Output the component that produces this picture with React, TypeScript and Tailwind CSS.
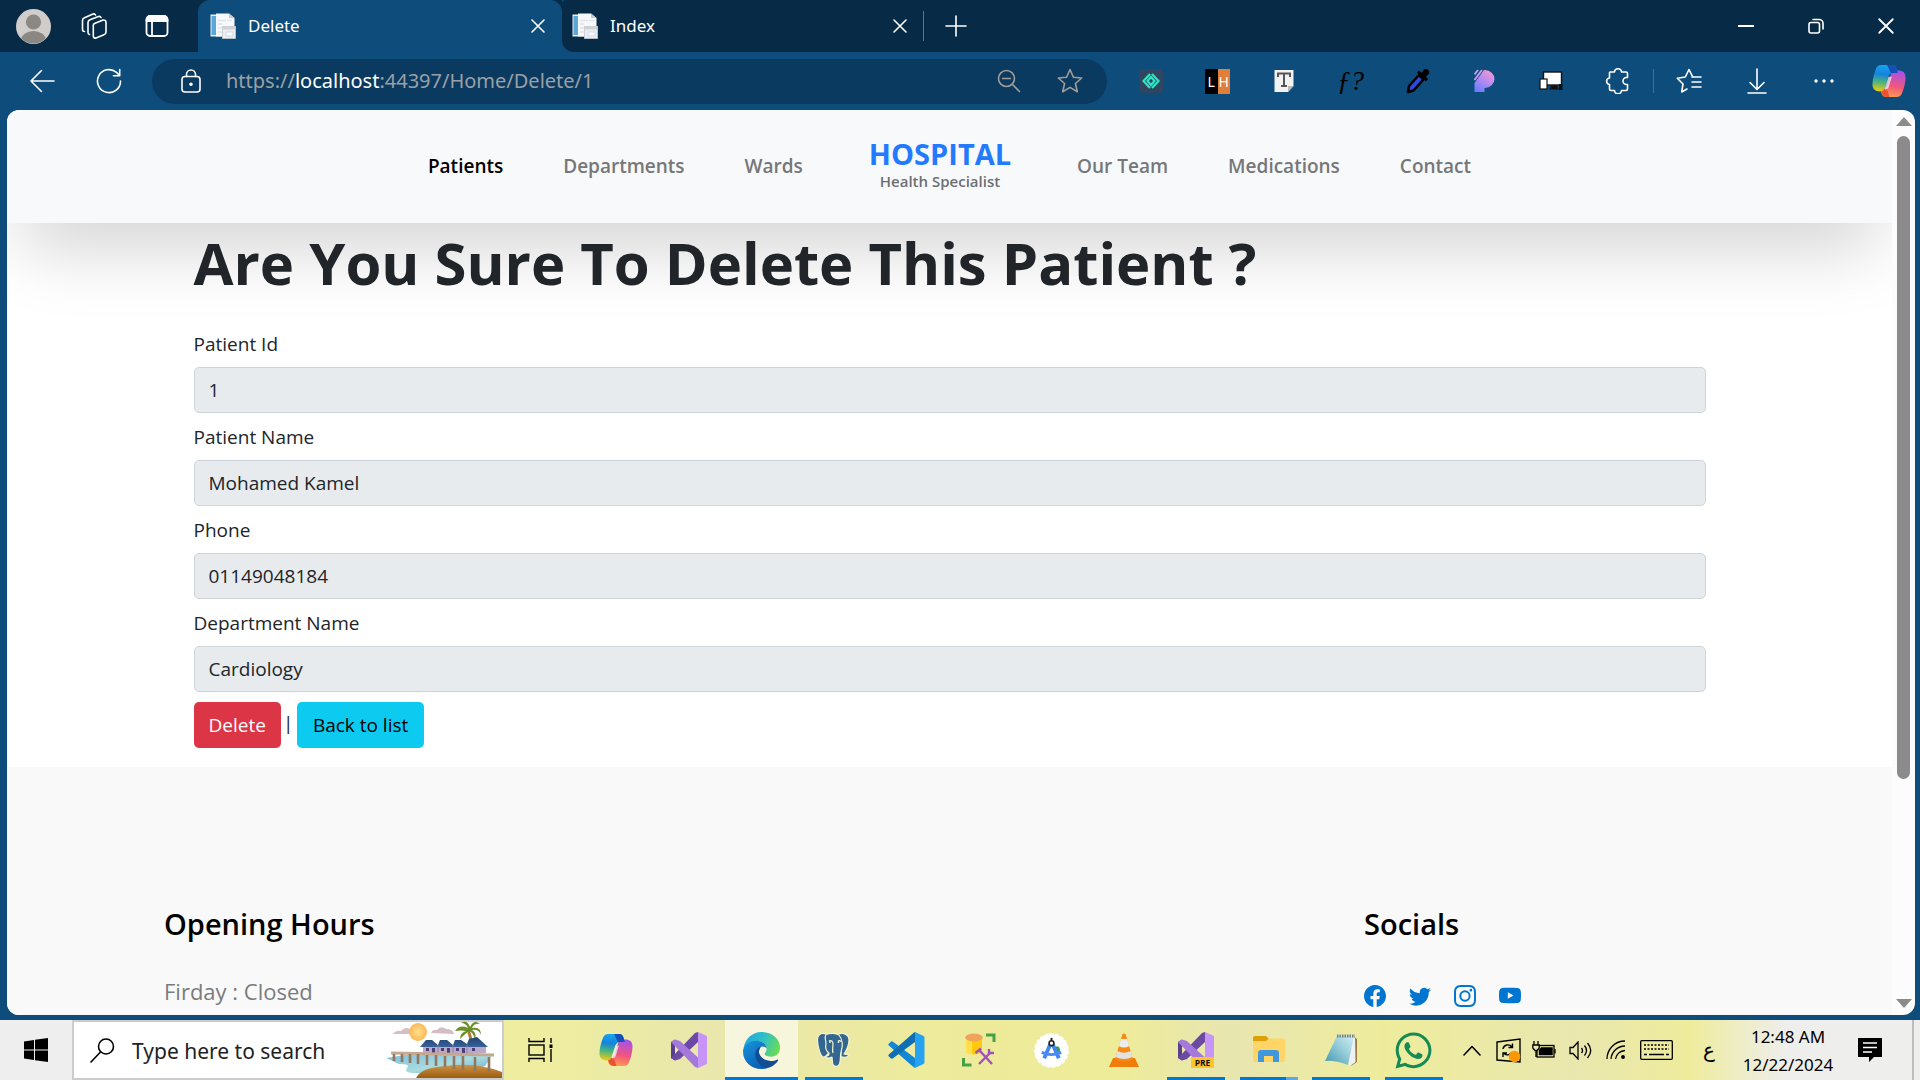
import React from "react";
import { BsFacebook, BsTwitter, BsInstagram, BsYoutube } from "react-icons/bs";
import { FaWhatsapp } from "react-icons/fa";

const stroke = { fill: "none", stroke: "currentColor", strokeWidth: 1.6, strokeLinecap: "round" as const, strokeLinejoin: "round" as const };

/* ---------- browser icons ---------- */

function Avatar() {
  return (
    <svg width="35" height="35" viewBox="0 0 35 35">
      <defs><clipPath id="av"><circle cx="17.5" cy="17.5" r="17" /></clipPath></defs>
      <circle cx="17.5" cy="17.5" r="17.5" fill="#d0cdca" />
      <g clipPath="url(#av)" fill="#8b8783">
        <circle cx="17.5" cy="13" r="7.6" />
        <ellipse cx="17.5" cy="31" rx="12.5" ry="9" />
      </g>
    </svg>
  );
}

function WorkspacesIcon() {
  return (
    <svg width="28" height="28" viewBox="0 0 28 28" {...stroke}>
      <path d="M14.5 11.5 L23 8 a2.5 2.5 0 0 1 3 2.4 V20 a3 3 0 0 1-2 2.8 L16 26 a2 2 0 0 1-2.700-2 V13.500 a2.200 2.200 0 0 1 1.200-2z" />
      <path d="M9.500 22.500 a2 2 0 0 1-1.500-2 V10.500 a3 3 0 0 1 2-2.800 L18.500 4.500 a2 2 0 0 1 2.500 1" />
      <path d="M4.500 19.500 a2 2 0 0 1-2-2 V8.500 a3 3 0 0 1 2-2.800 L13 2 a2 2 0 0 1 2.500 1" />
    </svg>
  );
}

function TabActionsIcon() {
  return (
    <svg width="24" height="24" viewBox="0 0 24 24" {...stroke} strokeWidth={1.8}>
      <rect x="1.500" y="2" width="21" height="20" rx="3.500" />
      <path d="M1.500 6 a4 4 0 0 1 4-4 H18.500 a4 4 0 0 1 4 4 V7 H1.500z" fill="currentColor" />
      <path d="M7 7 V22" />
    </svg>
  );
}

function Favicon() {
  return (
    <svg width="26" height="26" viewBox="0 0 26 26">
      <rect x="0.500" y="1.500" width="14" height="22" fill="#e9eef3" />
      <rect x="1.500" y="3" width="5" height="19" fill="#5aa7d8" />
      <path d="M6 0.500 H19 L24.500 5 V23.500 H6z" fill="#f7f8fa" />
      <path d="M19 0.500 L24.500 5 H19z" fill="#c3c9d1" />
      <path d="M8 7.500 H16 M8 11 H12 M8 15 H12 M8 19 H12 M17 7.500 H22" stroke="#e0e4ea" strokeWidth="1.500" />
      <rect x="12.500" y="13.500" width="13" height="12" fill="#eceef1" stroke="#c4c7cc" strokeWidth="0.800" />
      <rect x="12.500" y="13.500" width="13" height="3" fill="#cfd2d6" />
      <rect x="16" y="19" width="7" height="4" fill="#f8f9ff" stroke="#c3c9e3" strokeWidth="0.600" />
    </svg>
  );
}

function CloseIcon({ size }: { size: number }) {
  return (
    <svg width={size} height={size} viewBox="0 0 16 16" {...stroke}>
      <path d="M2 2 L14 14 M14 2 L2 14" />
    </svg>
  );
}

function Copilot({ id }: { id: string }) {
  const ribbon = "M10 1 H21 C24.500 1 25.500 3 26.500 6.500 L27.300 9.500 H25 C21.500 9.500 20.300 11 19.200 14.500 L16 25 C15 28 12.500 29 8.500 29 C3 29 0.500 26.500 0.500 21.500 C0.500 16 2.500 9 4.500 4.500 C5.500 2 7.500 1 10 1z";
  return (
    <svg width="34" height="34" viewBox="0 0 36 36">
      <defs>
        <linearGradient id={id + "a"} x1="0.400" y1="0" x2="0.300" y2="1">
          <stop offset="0" stopColor="#18a4f0" /><stop offset="0.350" stopColor="#1583dd" /><stop offset="0.650" stopColor="#4bb57c" /><stop offset="1" stopColor="#f2cb10" />
        </linearGradient>
        <linearGradient id={id + "b"} x1="0.500" y1="0" x2="0.300" y2="1">
          <stop offset="0" stopColor="#ff9a50" /><stop offset="0.400" stopColor="#f0567c" /><stop offset="1" stopColor="#a550ee" />
        </linearGradient>
      </defs>
      <path d={ribbon} transform="rotate(180 18 18)" fill={"url(#" + id + "b)"} />
      <path d="M9 26.500 L15.500 26 L18.500 35 H16 C12 35 11 33 10 29.500z" fill="#ee5130" />
      <path d="M10 1 H21 C24.500 1 25.500 3 26.500 6.500 L27.300 9.500 H24 C19.500 9.500 18 11 16.900 14.500 L13.600 25 C12.600 28 11.500 29 8.500 29 C3 29 0.500 26.500 0.500 21.500 C0.500 16 2.500 9 4.500 4.500 C5.500 2 7.500 1 10 1z" fill={"url(#" + id + "a)"} />
      <path d="M16 1 H21 C24.500 1 25.500 3 26.500 6.500 L27.300 9.500 H20z" fill="#1550b8" />
      <path d="M17.500 13.500 H21 L17.500 25 Q16.500 27 14 27 L13.200 26z" fill="#f4f0f6" opacity="0.750" />
    </svg>
  );
}

type IconButtonProps = { label: string; className?: string; children: React.ReactNode };

function IconButton({ label, className = "", children }: IconButtonProps) {
  return (
    <button type="button" aria-label={label} className={"flex shrink-0 items-center justify-center " + className}>
      {children}
    </button>
  );
}

function TabStrip() {
  return (
    <header className="flex h-[52px] shrink-0 bg-[#072b47] text-white">
      <div className="flex w-[198px] shrink-0 items-center pl-2">
        <IconButton label="Profile" className="w-[50px]"><Avatar /></IconButton>
        <IconButton label="Workspaces" className="w-[72px]"><WorkspacesIcon /></IconButton>
        <IconButton label="Tab actions" className="w-[54px]"><TabActionsIcon /></IconButton>
      </div>
      <div className="flex w-[364px] shrink-0 items-center rounded-t-xl bg-[#0d4c7b] pl-3 pr-4">
        <Favicon />
        <span className="ml-[12px] flex-1 text-[17px]">Delete</span>
        <IconButton label="Close Delete tab" className="size-4"><CloseIcon size={16} /></IconButton>
      </div>
      <div className="flex flex-1 bg-[linear-gradient(90deg,#0d4c7b_0_20px,#072b47_20px)]">
        <div className="flex flex-1 items-center rounded-bl-xl rounded-tl-sm bg-[#072b47] pl-[10px]">
          <Favicon />
          <span className="ml-[12px] w-[282px] text-[17px]">Index</span>
          <IconButton label="Close Index tab" className="size-4"><CloseIcon size={16} /></IconButton>
          <span className="ml-[15px] h-[30px] w-px bg-[#5b7488]" />
          <IconButton label="New tab" className="ml-[20px] size-6">
            <svg width="24" height="24" viewBox="0 0 24 24" {...stroke}><path d="M12 2 V22 M2 12 H22" /></svg>
          </IconButton>
          <div className="flex-1" />
          <IconButton label="Minimize" className="w-[70px]">
            <svg width="16" height="16" viewBox="0 0 16 16"><path d="M0 8 H16" stroke="white" strokeWidth="2" /></svg>
          </IconButton>
          <IconButton label="Restore" className="w-[70px]">
            <svg width="16" height="16" viewBox="0 0 16 16" {...stroke}>
              <rect x="1" y="4.500" width="10.500" height="10.500" rx="2" /><path d="M5 1.500 H11 a4 4 0 0 1 4 4 V11" />
            </svg>
          </IconButton>
          <IconButton label="Close window" className="w-[69px]"><CloseIcon size={18} /></IconButton>
        </div>
      </div>
    </header>
  );
}

function Toolbar() {
  return (
    <div className="flex h-[58px] shrink-0 items-center text-white">
      <IconButton label="Back" className="ml-2 w-[68px]">
        <svg width="26" height="24" viewBox="0 0 26 24" {...stroke}><path d="M25 12 H2 M12.500 1.500 L2 12 L12.500 22.500" /></svg>
      </IconButton>
      <IconButton label="Refresh" className="w-[66px]">
        <svg width="26" height="26" viewBox="0 0 26 26" {...stroke}><path d="M24.500 13 A11.500 11.500 0 1 1 20.500 4.400 L23.500 7.500 M23.700 1.500 V7.700 H17.500" /></svg>
      </IconButton>
      <div className="ml-[10px] flex h-[45px] flex-1 items-center rounded-full bg-[#0a3a60] pl-[26px] pr-[22px]">
        <IconButton label="View site information" className="w-[26px]">
          <svg width="20" height="24" viewBox="0 0 20 24" {...stroke}>
            <rect x="1" y="7.500" width="18" height="15.500" rx="3" /><path d="M5.500 7.500 V5.500 a4.500 4.500 0 0 1 9 0 V7.500" /><circle cx="10" cy="15.200" r="1" fill="currentColor" />
          </svg>
        </IconButton>
        <div role="textbox" aria-label="Address" className="ml-[22px] flex-1 text-[20px] text-[#9aa0a6]">
          https://<span className="text-white">localhost</span>:44397/Home/Delete/1
        </div>
        <IconButton label="Zoom out" className="w-[30px] text-[#a09c98]">
          <svg width="24" height="24" viewBox="0 0 24 24" {...stroke}><circle cx="9.500" cy="9.500" r="8" /><path d="M15.500 15.500 L22.500 22.500 M5.500 9.500 H13.500" /></svg>
        </IconButton>
        <IconButton label="Add to favorites" className="ml-[31px] w-[30px] text-[#a09c98]">
          <svg width="26" height="26" viewBox="0 0 26 26" {...stroke}><path d="M13 1.500 L16.400 9.200 L24.700 10 L18.400 15.500 L20.300 23.800 L13 19.400 L5.700 23.800 L7.600 15.500 L1.300 10 L9.600 9.200z" /></svg>
        </IconButton>
      </div>
      <div className="ml-[10px] flex shrink-0 items-center">
        <IconButton label="Code extension" className="w-[67px]">
          <span className="flex size-6 items-center justify-center rounded bg-[#2f4560]">
            <svg width="18" height="16" viewBox="0 0 18 16" fill="none" stroke="#2de5c3" strokeWidth="2.200"><path d="M8 1 L1.500 8 L8 15 M10 1 L16.500 8 L10 15 M9 4 L5.500 8 L9 12 L12.500 8z" /></svg>
          </span>
        </IconButton>
        <IconButton label="LH extension" className="w-[67px]">
          <span className="flex h-[25px] w-[25px] text-[14px] leading-[25px]">
            <span className="flex-1 bg-black text-center">L</span><span className="flex-1 bg-[#e07f3c] text-center">H</span>
          </span>
        </IconButton>
        <IconButton label="Text extension" className="w-[66px]">
          <svg width="20" height="24" viewBox="0 0 20 24">
            <path d="M0.500 1 H19.500 V17 L14 23 H0.500z" fill="#f2f2f2" /><path d="M19.500 17 L14 23 V17z" fill="#b9b9b9" />
            <path d="M4 8 V4.500 H16 V8 M10 4.500 V17 M7 17 H13" fill="none" stroke="#555" strokeWidth="2" />
          </svg>
        </IconButton>
        <IconButton label="Font finder" className="w-[67px] font-['Liberation_Serif',serif] text-[27px] italic leading-none text-black">ƒ?</IconButton>
        <IconButton label="Color picker" className="w-[67px]">
          <svg width="24" height="26" viewBox="0 0 24 26">
            <path d="M2 24 L3 18 L13 7 L17.500 11.500 L7.500 22.500z" fill="#2f49d8" stroke="black" strokeWidth="2.600" strokeLinejoin="round" />
            <path d="M11 4.500 L20 13.500 L22 11 L20 9 L23 5.500 C24 2 21 0 18 1.500 L15.500 5 L13 2.500z" fill="black" />
          </svg>
        </IconButton>
        <IconButton label="Pastel extension" className="w-[66px]">
          <svg width="21" height="24" viewBox="0 0 21 24">
            <defs><linearGradient id="pp" x1="0.800" y1="0" x2="0.200" y2="1"><stop offset="0" stopColor="#f49ad0" /><stop offset="0.500" stopColor="#b58af0" /><stop offset="1" stopColor="#6a7cff" /></linearGradient></defs>
            <path d="M10 1 H11 A9.500 9 0 0 1 11 19 H10.500 V23 H0.500 V14z" fill="url(#pp)" />
            <path d="M0.500 5.500 L4 1 M0.500 11 L8 1" stroke="#c597ee" strokeWidth="2" />
          </svg>
        </IconButton>
        <IconButton label="Responsive viewer" className="w-[67px]">
          <svg width="24" height="20" viewBox="0 0 24 20">
            <rect x="4.500" y="1" width="18" height="13" fill="white" stroke="#111" strokeWidth="1.400" />
            <path d="M12 15 H18 L20 18.500 H10z" fill="#111" /><rect x="1" y="8" width="7" height="10" fill="white" stroke="#111" strokeWidth="1.200" />
            <rect x="20" y="13" width="3.500" height="6" fill="#111" />
          </svg>
        </IconButton>
        <IconButton label="Extensions" className="mr-[2px] w-[67px]">
          <svg width="26" height="26" viewBox="0 0 26 26" {...stroke}>
            <path d="M5 4 H9.500 a3.500 3.300 0 0 1 7 0 H21 a1.500 1.500 0 0 1 1.500 1.500 V9.500 H21.500 a3.300 3.300 0 0 0 0 7 H22.500 V21 a1.500 1.500 0 0 1-1.500 1.500 H16.500 a3.500 3.300 0 0 1-7 0 H6 a1.500 1.500 0 0 1-1.500-1.500 V16.500 a3.500 3.300 0 0 1 0-6.500 V5.500 A1.500 1.500 0 0 1 5 4z" />
          </svg>
        </IconButton>
        <span className="h-6 w-px bg-[#3d7099]" />
        <IconButton label="Favorites" className="w-[70px]">
          <svg width="26" height="26" viewBox="0 0 26 26" {...stroke}>
            <path d="M16.500 8.500 L13 1.500 L9.300 9 L1.300 10.200 L7 16 L5.700 24 L11 21" /><path d="M16 9 H25 M16 14 H25 M16 19 H25" />
          </svg>
        </IconButton>
        <IconButton label="Downloads" className="w-[66px]">
          <svg width="20" height="26" viewBox="0 0 20 26" {...stroke}><path d="M10 1 V21 M3 14.500 L10 21.500 L17 14.500 M1 25 H19" /></svg>
        </IconButton>
        <IconButton label="Settings and more" className="w-[68px]">
          <svg width="22" height="6" viewBox="0 0 22 6" fill="white"><circle cx="3" cy="3" r="1.700" /><circle cx="11" cy="3" r="1.700" /><circle cx="19" cy="3" r="1.700" /></svg>
        </IconButton>
        <IconButton label="Copilot" className="w-[62px]"><Copilot id="cp1" /></IconButton>
      </div>
    </div>
  );
}

/* ---------- web page ---------- */

const fields = [
  { id: "pid", label: "Patient Id", value: "1" },
  { id: "pname", label: "Patient Name", value: "Mohamed Kamel" },
  { id: "phone", label: "Phone", value: "01149048184" },
  { id: "dept", label: "Department Name", value: "Cardiology" },
];

function NavLink({ children, active = false }: { children: React.ReactNode; active?: boolean }) {
  return <a href="#" className={active ? "text-black" : "text-[#757779]"}>{children}</a>;
}

function HospitalPage() {
  return (
    <div className="min-w-0 flex-1 overflow-hidden bg-white font-['Open_Sans',sans-serif] text-[#212529]">
      <nav className="flex h-[113px] items-center justify-center gap-[60px] bg-[#f8f9fb] text-[19px] font-semibold shadow-[0_40px_70px_-15px_rgba(0,0,0,0.175)]">
        <NavLink active>Patients</NavLink>
        <NavLink>Departments</NavLink>
        <NavLink>Wards</NavLink>
        <a href="#" className="mx-[6px] flex flex-col items-center pb-1">
          <span className="text-[29px] font-bold leading-[32px] text-[#227bff]">HOSPITAL</span>
          <span className="text-[15px] font-semibold leading-[22px] text-[#6c6f73]">Health Specialist</span>
        </a>
        <NavLink>Our Team</NavLink>
        <NavLink>Medications</NavLink>
        <NavLink>Contact</NavLink>
      </nav>
      <main className="mx-auto max-w-[1512px] pb-[19px]">
        <h1 className="pt-[5px] text-[58px] font-bold leading-[70px]">Are You Sure To Delete This Patient ?</h1>
        <form className="pt-[23px]">
          {fields.map((f) => (
            <div key={f.id} className="mb-px">
              <label htmlFor={f.id} className="block h-[46px] text-[19px] leading-[47px]">{f.label}</label>
              <input id={f.id} readOnly value={f.value} className="block h-[46px] w-full rounded-[5px] border border-[#ced4da] bg-[#e8ebee] px-[14px] text-[19px] outline-none" />
            </div>
          ))}
          <div className="mt-[10px] flex text-[19px]">
            <button type="button" className="h-[46px] rounded-[5px] bg-[#dc3545] px-[15px] text-white">Delete</button>
            <span className="w-4 pl-[2px] leading-[42px]">|</span>
            <button type="button" className="h-[46px] rounded-[5px] bg-[#0dcaf0] px-4 text-black">Back to list</button>
          </div>
        </form>
      </main>
      <footer className="flex h-[400px] bg-[#f9f9f9] pl-[157px] pt-[137px]">
        <div className="w-[1200px]">
          <h2 className="text-[29px] font-semibold leading-[40px] text-black">Opening Hours</h2>
          <p className="mt-[32px] text-[22px] leading-[30px] text-[#797c7f]">Firday : Closed</p>
        </div>
        <div>
          <h2 className="text-[29px] font-semibold leading-[40px] text-black">Socials</h2>
          <div className="mt-[41px] flex gap-[23px] text-[22px] text-[#0076d1]">
            <a href="#" aria-label="Facebook"><BsFacebook /></a>
            <a href="#" aria-label="Twitter"><BsTwitter /></a>
            <a href="#" aria-label="Instagram"><BsInstagram /></a>
            <a href="#" aria-label="YouTube"><BsYoutube /></a>
          </div>
        </div>
      </footer>
    </div>
  );
}

function ScrollBar() {
  return (
    <div className="flex w-[23px] shrink-0 flex-col items-center bg-[#fcfcfc] py-[7px]">
      <svg width="16" height="9" viewBox="0 0 16 9"><path d="M8 0 L16 9 H0z" fill="#8b8b8b" /></svg>
      <div className="my-[10px] w-[13px] flex-1"><div className="h-[calc(75%+3px)] rounded-full bg-[#8b8b8b]" /></div>
      <svg width="16" height="9" viewBox="0 0 16 9"><path d="M8 9 L16 0 H0z" fill="#8b8b8b" /></svg>
    </div>
  );
}

/* ---------- taskbar icons ---------- */

function BeachArt() {
  return (
    <svg width="117" height="58" viewBox="0 0 117 58">
      <defs>
        <linearGradient id="sea" x1="0" y1="0" x2="1" y2="1"><stop offset="0" stopColor="#7cc0dd" /><stop offset="0.500" stopColor="#a9dbe0" /><stop offset="1" stopColor="#4f9fd2" /></linearGradient>
        <linearGradient id="sand" x1="0" y1="0" x2="0" y2="1"><stop offset="0" stopColor="#cf9445" /><stop offset="1" stopColor="#9a5c10" /></linearGradient>
        <linearGradient id="roof" x1="0" y1="0" x2="0" y2="1"><stop offset="0" stopColor="#1b4474" /><stop offset="1" stopColor="#3a6196" /></linearGradient>
        <radialGradient id="sun"><stop offset="0" stopColor="#ffe08c" /><stop offset="1" stopColor="#fbb958" /></radialGradient>
      </defs>
      <path d="M8 14 q3-4 8-3 q4-5 9-2 v5z" fill="#d5bfc0" />
      <path d="M46 13 q2-4 6-3 q4-5 9-1 q7 0 8 5z" fill="#d3bcc4" />
      <circle cx="33" cy="12" r="9" fill="url(#sun)" />
      <path d="M83 9 q6 16 3 40" stroke="#b07a38" strokeWidth="3" fill="none" />
      <path d="M83 8 q-8-4-13 3 q6-1 11 0 q-6 2-6 8 q5-5 9-8 q5 2 6 9 q2-7-3-10 q7-1 9 5 q0-9-9-7 q2-5 8-4 q-6-5-10 3 q-3-8-9-4 q5 0 7 5z" fill="#6a8f27" />
      <path d="M1 38 L20 35 L108 34 L100 46 L60 57 H38 q3-4-8-4 q-12 0-8-5 q4-4-8-4z" fill="url(#sea)" />
      <path d="M31 58 Q36 47 62 46 Q90 42 117 52 V58z" fill="url(#sand)" />
      <path d="M38 26 H101 V33 H38z" fill="#b9a8c6" />
      <path d="M35 27 L41 20 H47 L53 25 L55 20 H62 L68 25 L70 20 H76 L82 24 L84 19 L92 17 L103 27z" fill="url(#roof)" />
      <path d="M53 25 V33 M68 25 V33 M82 25 V33" stroke="#8d7fae" strokeWidth="1" />
      <g fill="#4c3c7c"><rect x="41" y="28" width="3" height="3" /><rect x="47" y="28" width="3" height="5" /><rect x="56" y="28" width="3" height="3" /><rect x="62" y="28" width="3" height="5" /><rect x="71" y="28" width="3" height="3" /><rect x="77" y="28" width="3" height="5" /><rect x="87" y="28" width="3" height="3" /></g>
      <path d="M6 33 L109 35" stroke="#c5a98e" strokeWidth="3" />
      <path d="M9 34 V41 M17 34 V42 M25 34 V43 M33 34 V44 M42 35 V45 M51 35 V46 M60 36 V47 M69 36 V49 M78 36 V50 M90 37 V51 M104 37 V52" stroke="#94765f" strokeWidth="2.600" />
    </svg>
  );
}

function VisualStudio({ pre = false }: { pre?: boolean }) {
  return (
    <svg width="36" height="36" viewBox="0 0 36 36">
      <path d="M0 10 L4 7.500 V28.500 L0 26z" fill="#59408f" />
      <path d="M0 26 L4 28.500 L9 27 L27 10 V0 L24 1z" fill="#6b49a4" />
      <path d="M0 10 L4 7.500 L9 9 L27 25.500 V36 L24 35z" fill="#a579dc" />
      <path d="M27 0 L36 4 V32 L27 36z" fill="#c795f7" />
      {pre && <rect x="13" y="25" width="23" height="11" rx="1" fill="#ffc32b" />}
      {pre && <text x="24.500" y="33.700" fontSize="8.500" fontWeight="700" textAnchor="middle" fontFamily="Open Sans, sans-serif" fill="#111">PRE</text>}
    </svg>
  );
}

function Edge() {
  return (
    <svg width="37" height="37" viewBox="0 0 36 36">
      <defs>
        <linearGradient id="eg" x1="0" y1="0.300" x2="1" y2="0.600"><stop offset="0" stopColor="#1fa5dc" /><stop offset="0.500" stopColor="#2fc0c8" /><stop offset="1" stopColor="#6bdc50" /></linearGradient>
        <linearGradient id="eb" x1="0" y1="0" x2="0.600" y2="1"><stop offset="0" stopColor="#1795dc" /><stop offset="1" stopColor="#0a5fb4" /></linearGradient>
      </defs>
      <path d="M0.500 16 C2 6.500 9 0 18 0 C28.500 0 36 7 36 15 C36 21 32 24 27 24 C23 24 21 22.500 21 21.500 C21 20.500 23 19.500 23 16 C23 12 19 9 14 9 C7 9 2 13 0.500 16z" fill="url(#eg)" />
      <path d="M0 19 C0 13 6 8.500 13 8.500 C19 8.500 23 12 23 16 C22 14 19 13.500 17 14.500 L15 20 L24 35 C22 36 20 36 18 36 C8 36 0 29 0 19z" fill="url(#eb)" />
      <path d="M12 22 C12 29 18 35 24 35 C29 34 32 31 34 28 C34.500 27 34 26.500 33 27 C31 28 28 28.500 25.500 28 C19 27 15.500 23 15.500 19 C15.500 17 16.500 15 18 14.200 C14 15 12 18 12 22z" fill="#124c94" />
    </svg>
  );
}

function Postgres() {
  return (
    <svg width="35" height="36" viewBox="0 0 35 36">
      <g fill="#336791" stroke="#f4f4d4" strokeWidth="1.200" strokeLinejoin="round">
        <path d="M22 2 C28 0 33 3 33 8 C33 13 30 19 28 22 C30 22.500 32 22 33 23 C31 26 26 26 25 24 C24.500 20 27 12 22 2z" />
        <path d="M10 2 C4 0 1 4 1.500 9 C2 15 4 24 7.500 25 C10 25 11 22 13 21 L14 8z" />
        <path d="M10 2.500 C14 1 20 1 23 3 C27 8 27 14 25 20 C24 24 25 28 23.500 32 C22 35.500 17 35 16.500 31 L16 25 C13 27 10 26 9.500 24.500 C12 24 13.500 23 13 21 C10 19 9 16 10 12 C10 8 8 5 10 2.500z" />
      </g>
      <path d="M13 9 C15 8 17 9 17 12 C17 15 16 18 17 21 M22 9 C24 8 25 9 25 10" fill="none" stroke="#f4f4d4" strokeWidth="1.200" />
      <circle cx="14" cy="10" r="0.900" fill="#f4f4d4" /><circle cx="22.500" cy="10" r="0.900" fill="#f4f4d4" />
    </svg>
  );
}

function VSCode() {
  return (
    <svg width="37" height="36" viewBox="0 0 37 36">
      <path d="M0.500 12 L3 9.500 Q4 9 5 9.800 L27 26 V36 L26 35.500 L0.800 13.500 Q0 13 0.500 12z" fill="#1187d6" />
      <path d="M0.500 24 L3 26.500 Q4 27 5 26.200 L27 10 V0 L26 0.500 L0.800 22.500 Q0 23 0.500 24z" fill="#0f6fb5" />
      <path d="M27 0 L35.500 4 Q36.500 4.500 36.500 6 V30 Q36.500 31.500 35.500 32 L27 36 L25.500 34.500 L27 33z" fill="#27a2f0" />
    </svg>
  );
}

function DbTool() {
  return (
    <svg width="34" height="34" viewBox="0 0 34 34">
      <path d="M4 4 V19 Q12 24 20 19 V4z" fill="#ffc90e" /><path d="M4 4 V19 Q7 21 10 21.500 V4z" fill="#ffe04a" />
      <ellipse cx="12" cy="4.500" rx="8.800" ry="4" fill="#f1a35b" />
      <path d="M24 2 H32 V9 M1.500 25 V32 H9.500" fill="none" stroke="#46a145" strokeWidth="3" />
      <path d="M17 31 L28 20 M18 18 L30 31 M13.500 20 L19 15.500" stroke="#a24fc0" strokeWidth="2.400" fill="none" />
      <path d="M27 16 V20 H32" stroke="#a24fc0" strokeWidth="2.400" fill="none" />
    </svg>
  );
}

function AndroidStudio() {
  return (
    <svg width="35" height="35" viewBox="0 0 36 36">
      <circle cx="18" cy="18" r="16.800" fill="white" stroke="white" strokeWidth="2.200" strokeDasharray="4 1.500" />
      <path d="M22 14 h3 a5 5 0 0 1 1 6 h-4z" fill="#2c9f4f" />
      <path d="M17 11 L10.500 26 M19 11 L25.500 26" stroke="#4285f4" strokeWidth="4" /><path d="M8 20 Q18 24.500 28 20" stroke="#4a8af4" strokeWidth="3" fill="none" />
      <path d="M18 5 V8" stroke="#222" strokeWidth="2" /><circle cx="18" cy="10.500" r="2.500" fill="white" stroke="#222" strokeWidth="1.600" />
    </svg>
  );
}

function Vlc() {
  return (
    <svg width="30" height="35" viewBox="0 0 30 35">
      <path d="M4 25 H26 L30 34 H0z" fill="#f07c0a" />
      <path d="M13.500 1 Q15 0 16.500 1 L24 26 Q15 31 6 26z" fill="#f58a14" />
      <path d="M12 6 H18 L20.300 13 Q15 16 9.700 13z" fill="#ececec" /><path d="M8.300 18 Q15 21.500 21.700 18 L23.500 24 Q15 28 6.500 24z" fill="#e2e2e2" />
    </svg>
  );
}

function Explorer() {
  return (
    <svg width="32" height="28" viewBox="0 0 32 28">
      <path d="M0 2 Q0 0 2 0 H13 L16 3 V6 H0z" fill="#dfa006" />
      <path d="M0 5 H13 L16 2.500 H30 Q32 2.500 32 5 V24 Q32 26 30 26 H2 Q0 26 0 24z" fill="#ffd567" />
      <path d="M5 26 V17 Q5 14 8 14 H23 Q26 14 26 17 V26 H20 V20 H11 V26z" fill="#3f97de" />
    </svg>
  );
}

function Notepad() {
  return (
    <svg width="34" height="34" viewBox="0 0 34 34">
      <defs><linearGradient id="np" x1="0" y1="1" x2="1" y2="0"><stop offset="0" stopColor="#3f97ad" /><stop offset="0.600" stopColor="#9bd0dc" /><stop offset="1" stopColor="#d4edf2" /></linearGradient></defs>
      <path d="M30 4 L33 6 L33 29 L27 33z" fill="#9c7c45" /><path d="M28 3 L31 5 L31.500 29 L26 33 L24 31z" fill="#eef1f3" />
      <path d="M13 3 H30 L24 32 Q10 27 1 28z" fill="url(#np)" />
      <path d="M13 3 H31" stroke="#6e7f88" strokeWidth="3" strokeDasharray="1.500 1" />
    </svg>
  );
}

type TaskApp = { name: string; icon: React.ReactNode; bar?: string; active?: boolean };

const apps: TaskApp[] = [
  { name: "Copilot", icon: <Copilot id="cp2" /> },
  { name: "Visual Studio", icon: <VisualStudio /> },
  { name: "Microsoft Edge", icon: <Edge />, active: true, bar: "w-full bg-[#0078d7]" },
  { name: "PostgreSQL", icon: <Postgres />, bar: "w-[58px] bg-[#0078d7]" },
  { name: "Visual Studio Code", icon: <VSCode /> },
  { name: "Database tools", icon: <DbTool /> },
  { name: "Android Studio", icon: <AndroidStudio /> },
  { name: "VLC", icon: <Vlc /> },
  { name: "Visual Studio Preview", icon: <VisualStudio pre />, bar: "w-[58px] bg-[#0078d7]" },
  { name: "File Explorer", icon: <Explorer />, bar: "w-[58px] bg-[linear-gradient(90deg,#0078d7_46px,#5fa8e4_46px)]" },
  { name: "Notepad", icon: <Notepad />, bar: "w-[58px] bg-[#0078d7]" },
  { name: "WhatsApp", icon: <FaWhatsapp size={41} color="#158a55" />, bar: "w-[58px] bg-[#0078d7]" },
];

function Taskbar() {
  return (
    <footer className="flex h-[60px] shrink-0 bg-[linear-gradient(90deg,#eeeeee_0_26%,#eeeda0_26%_29%,#e9e7ac_37%,#edeb9c_48%,#eeec98_58%,#e8e6b0_64%,#eeec9c_72%,#e9e7ae_82%,#eeec9c_88%,#eeeeec_93%)] text-black">
      <IconButton label="Start" className="w-[72px]">
        <svg width="24" height="24" viewBox="0 0 24 24"><path d="M0 3.500 L10 2 V11.500 H0z M11 1.800 L24 0 V11.500 H11z M0 12.500 H10 V22 L0 20.500z M11 12.500 H24 V24 L11 22.200z" /></svg>
      </IconButton>
      <label className="flex w-[432px] shrink-0 items-center border-2 border-[#cccccc] bg-white">
        <svg className="ml-[16px] shrink-0" width="25" height="25" viewBox="0 0 25 25" {...stroke}><circle cx="16" cy="8.500" r="7.500" /><path d="M10.500 14 L1 24" /></svg>
        <input type="search" aria-label="Search" placeholder="Type here to search" className="ml-[17px] min-w-0 flex-1 bg-transparent pt-1 text-[21px] outline-none placeholder:text-[#222222]" />
        <span className="shrink-0 self-end"><BeachArt /></span>
      </label>
      <IconButton label="Task view" className="w-[73px]">
        <svg width="25" height="24" viewBox="0 0 25 24" fill="none" stroke="black" strokeWidth="1.400"><path d="M1 0 V3.500 H16 V0 M1 24 V20.500 H16 V24 M23 0 V5 M23 11 V24" /><rect x="1" y="7" width="15" height="10" /><path d="M23 6.500 V10" strokeWidth="3" /></svg>
      </IconButton>
      <div className="ml-[3px] flex w-[870px] shrink-0">
        {apps.map((a) => (
          <button key={a.name} type="button" aria-label={a.name} className={a.active ? "flex flex-1 flex-col items-center bg-white/60" : "flex flex-1 flex-col items-center"}>
            <span className="flex flex-1 items-center pt-[3px]">{a.icon}</span>
            <span className={"h-[3px] " + (a.bar ?? "")} />
          </button>
        ))}
      </div>
      <div className="flex flex-1 items-center pl-1">
        <IconButton label="Show hidden icons" className="w-9">
          <svg width="18" height="11" viewBox="0 0 18 11" {...stroke}><path d="M1 10 L9 1.500 L17 10" /></svg>
        </IconButton>
        <IconButton label="Windows Update" className="w-9">
          <svg width="25" height="25" viewBox="0 0 25 25" fill="none" stroke="black" strokeWidth="1.400"><path d="M1 4 L24 1 V24 L1 22z" /><path d="M7 11 a5 5 0 0 1 9-2 M16.500 5.500 V9.500 H12.500 M16 14 a5 5 0 0 1-8 1.500 M7 19 V15 H11" /><circle cx="18.500" cy="18.500" r="5.800" fill="#ff9800" stroke="none" /></svg>
        </IconButton>
        <IconButton label="Battery" className="w-9">
          <svg width="24" height="18" viewBox="0 0 24 18" fill="none" stroke="black" strokeWidth="1.300"><rect x="5" y="4.500" width="17" height="11.500" /><path d="M9 6.500 H20.500 V14 H7 V9z" fill="black" strokeWidth="0.500" /><path d="M23 8 V12.500 M2 0 V4 M6 0 V4 M4 9.500 V16" /><path d="M0.800 4 H7.200 V7 L5 9.500 H3 L0.800 7z" fill="#ecebac" /></svg>
        </IconButton>
        <IconButton label="Volume" className="w-9">
          <svg width="23" height="19" viewBox="0 0 23 19" fill="none" stroke="black" strokeWidth="1.300"><path d="M1 6.500 H4 L9 1 V18 L4 12.500 H1z M12.500 7 q2 2.500 0 5 M15.500 4.500 q4 5 0 10 M18.500 2 q6.500 7.500 0 15" /></svg>
        </IconButton>
        <IconButton label="Network" className="w-9">
          <svg width="20" height="20" viewBox="0 0 20 20" fill="none" stroke="black" strokeWidth="1.300"><path d="M1 19 A18 18 0 0 1 19 1 M5 19 A14 14 0 0 1 19 6 M9.500 19 A10 10 0 0 1 19 10.500" /><circle cx="17" cy="17" r="1.300" fill="black" /></svg>
        </IconButton>
        <IconButton label="Touch keyboard" className="w-11">
          <svg width="33" height="20" viewBox="0 0 33 20" fill="none" stroke="black" strokeWidth="1.300"><rect x="0.700" y="0.700" width="31.600" height="18.600" rx="1" /><path d="M4 5 H29 M4 9 H29" strokeDasharray="2 1.500" /><path d="M4 14.500 H7 M9 14.500 H24 M26 14.500 H29" /></svg>
        </IconButton>
        <IconButton label="Input language" className="w-[62px] text-[20px]">ع</IconButton>
        <button type="button" className="flex w-24 flex-col items-center whitespace-nowrap pt-px text-[17px] leading-[28px]"><span>12:48 AM</span><span>12/22/2024</span></button>
        <IconButton label="Notifications" className="w-[68px]">
          <svg width="24" height="24" viewBox="0 0 24 24"><path d="M0 0 H24 V19 H16 L11 24 V19 H0z" /><path d="M5 5 H19 M5 9.500 H19 M5 14 H14" stroke="white" strokeWidth="1.500" /></svg>
        </IconButton>
        <span className="ml-2 h-full w-[2px] bg-[#bdbdbd]" />
      </div>
    </footer>
  );
}

export default function App() {
  return (
    <div className="flex h-screen flex-col overflow-hidden bg-[#0d4c7b] font-['Noto_Sans','Open_Sans',sans-serif]">
      <TabStrip />
      <Toolbar />
      <div className="mb-[5px] ml-[7px] mr-[5px] flex min-h-0 flex-1 overflow-hidden rounded-xl">
        <HospitalPage />
        <ScrollBar />
      </div>
      <Taskbar />
    </div>
  );
}
